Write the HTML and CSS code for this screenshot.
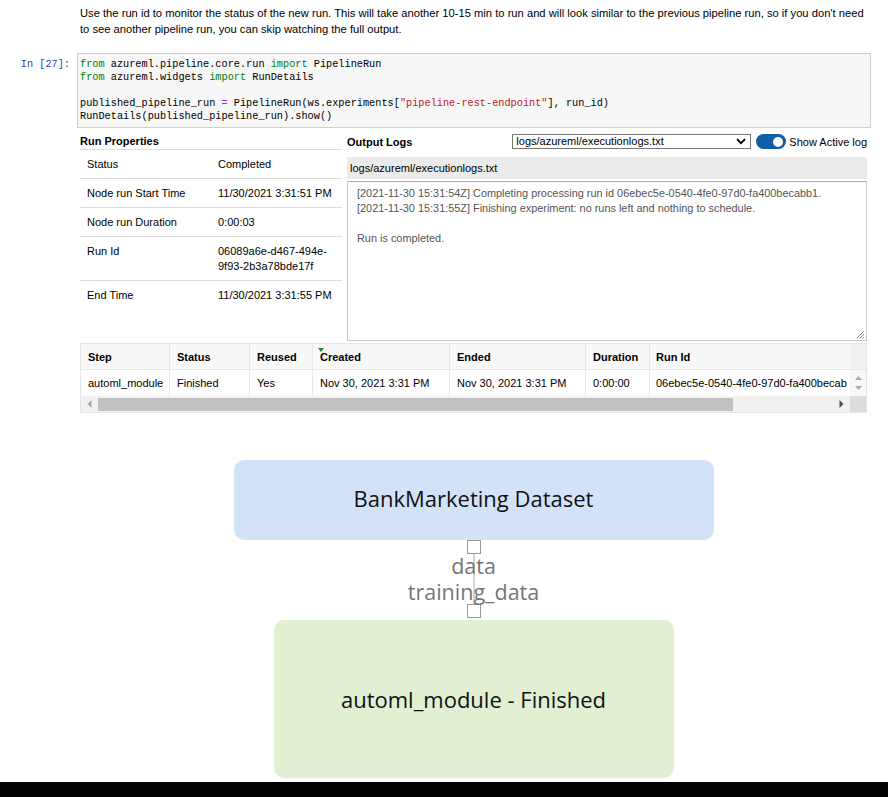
FILE: index.html
```html
<!DOCTYPE html>
<html>
<head>
<meta charset="utf-8">
<link rel="stylesheet" href="styles.css">
</head>
<body>
<div class="md">Use the run id to monitor the status of the new run. This will take another 10-15 min to run and will look similar to the previous pipeline run, so if you don't need<br>to see another pipeline run, you can skip watching the full output.</div>

<div class="cell">
  <div class="prompt">In&nbsp;[27]:</div>
  <div class="code"><div class="ln"><span class="kw">from</span> azureml.pipeline.core.run <span class="kw">import</span> PipelineRun</div><div class="ln"><span class="kw">from</span> azureml.widgets <span class="kw">import</span> RunDetails</div><div class="ln">&nbsp;</div><div class="ln">published_pipeline_run <span class="op">=</span> PipelineRun(ws.experiments[<span class="str">"pipeline-rest-endpoint"</span>], run_id)</div><div class="ln">RunDetails(published_pipeline_run).show()</div></div>
</div>

<div class="widget">
  <div class="top">
    <div class="props">
      <div class="props-title">Run Properties</div>
      <div class="prow"><span class="pk">Status</span><span class="pv">Completed</span></div>
      <div class="prow"><span class="pk">Node run Start Time</span><span class="pv">11/30/2021 3:31:51 PM</span></div>
      <div class="prow"><span class="pk">Node run Duration</span><span class="pv">0:00:03</span></div>
      <div class="prow"><span class="pk">Run Id</span><span class="pv">06089a6e-d467-494e-9f93-2b3a78bde17f</span></div>
      <div class="prow last"><span class="pk">End Time</span><span class="pv">11/30/2021 3:31:55 PM</span></div>
    </div>
    <div class="logs">
      <div class="logs-head">
        <span class="logs-title">Output Logs</span>
        <div class="logs-ctrl">
          <div class="select">
            <span>logs/azureml/executionlogs.txt</span>
            <svg width="10" height="7" viewBox="0 0 10 7"><path d="M1 1.2 L5 5.2 L9 1.2" fill="none" stroke="#000" stroke-width="1.8"/></svg>
          </div>
          <div class="toggle"><span class="knob"></span></div>
          <span class="toggle-label">Show Active log</span>
        </div>
      </div>
      <div class="logfile">logs/azureml/executionlogs.txt</div>
      <div class="logtext">
        <div class="ln">[2021-11-30 15:31:54Z] Completing processing run id 06ebec5e-0540-4fe0-97d0-fa400becabb1.</div>
        <div class="ln">[2021-11-30 15:31:55Z] Finishing experiment: no runs left and nothing to schedule.</div>
        <div class="ln">&nbsp;</div>
        <div class="ln">Run is completed.</div>
        <svg class="grip" width="9" height="9" viewBox="0 0 9 9"><path d="M1 8 L8 1 M4 8 L8 4 M7 8 L8 7" stroke="#888" stroke-width="1"/></svg>
      </div>
    </div>
  </div>

  <div class="steps">
    <div class="grid">
      <div class="th">Step</div>
      <div class="th">Status</div>
      <div class="th">Reused</div>
      <div class="th sorted"><span class="tri"></span>Created</div>
      <div class="th">Ended</div>
      <div class="th">Duration</div>
      <div class="th clip">Run Id</div>
      <div class="vs vs-head"></div>
      <div class="td">automl_module</div>
      <div class="td">Finished</div>
      <div class="td">Yes</div>
      <div class="td">Nov 30, 2021 3:31 PM</div>
      <div class="td">Nov 30, 2021 3:31 PM</div>
      <div class="td">0:00:00</div>
      <div class="td clip"><span class="runid">06ebec5e-0540-4fe0-97d0-fa400becab</span></div>
      <div class="vs vs-body">
        <svg width="9" height="20" viewBox="0 0 9 20"><path d="M1 7 L4.5 3 L8 7 Z M1 13 L4.5 17 L8 13 Z" fill="#a8a8a8"/></svg>
      </div>
    </div>
    <div class="hscroll">
      <svg class="arr-l" width="5" height="8" viewBox="0 0 5 8"><path d="M4.5 0 L0.5 4 L4.5 8 Z" fill="#a8a8a8"/></svg>
      <div class="thumb"></div>
      <svg class="arr-r" width="5" height="8" viewBox="0 0 5 8"><path d="M0.5 0 L4.5 4 L0.5 8 Z" fill="#505050"/></svg>
      <div class="corner"></div>
    </div>
  </div>

  <div class="diagram">
    <div class="node ds">BankMarketing Dataset</div>
    <div class="port"></div>
    <div class="edge">
      <span class="lbl">data</span>
      <span class="lbl">training_data</span>
    </div>
    <div class="port"></div>
    <div class="node mod">automl_module - Finished</div>
  </div>
</div>
<div class="blackbar"></div>
</body>
</html>
```

FILE: styles.css
```css
html, body {
  margin: 0;
  padding: 0;
  background: #fff;
}
body {
  font-family: "Liberation Sans", Arial, sans-serif;
  color: #000;
  height: 797px;
  overflow: hidden;
  position: relative;
}
.md {
  padding: 5px 0 0 80px;
  font-size: 11.2px;
  line-height: 16px;
  color: #000;
  white-space: nowrap;
}
.cell {
  display: flex;
  margin-top: 16px;
}
.prompt {
  width: 77px;
  box-sizing: border-box;
  padding: 5px 7px 0 0;
  text-align: right;
  color: #303f9f;
  font-family: "Liberation Mono", monospace;
  font-size: 10.25px;
  line-height: 13px;
}
.code {
  width: 794px;
  height: 75px;
  box-sizing: border-box;
  border: 1px solid #cfcfcf;
  background: #f7f7f7;
  padding: 4px 2px;
  font-family: "Liberation Mono", monospace;
  font-size: 10.25px;
  line-height: 13px;
  color: #000;
}
.code .ln {
  height: 13px;
  white-space: pre;
}
.kw { color: #008000; }
.op { color: #aa22ff; }
.str { color: #ba2121; }

.widget {
  margin: 6px 0 0 80px;
  width: 787px;
  font-size: 11px;
}
.top {
  display: grid;
  grid-template-columns: 262px 520px;
  column-gap: 5px;
}
.props-title {
  font-weight: bold;
  line-height: 15px;
  height: 15px;
  border-bottom: 1px solid #dedede;
}
.prow {
  display: flex;
  padding: 7px 0 6px 7px;
  line-height: 15px;
  border-bottom: 1px solid #dedede;
}
.prow.last { border-bottom: none; }
.pk { width: 131px; flex: none; }
.pv { width: 118px; }

.logs-head {
  display: flex;
  justify-content: space-between;
  align-items: center;
  height: 15px;
}
.logs-title { font-weight: bold; }
.logs-ctrl {
  display: flex;
  align-items: center;
}
.select {
  width: 239px;
  height: 15px;
  box-sizing: border-box;
  border: 1px solid #767676;
  display: flex;
  justify-content: space-between;
  align-items: center;
  padding: 0 4px 0 3px;
  font-size: 11px;
  line-height: 13px;
}
.toggle {
  width: 30px;
  height: 15px;
  margin-left: 5px;
  border-radius: 8px;
  background: #0f5ea8;
  position: relative;
}
.knob {
  position: absolute;
  right: 3px;
  top: 2.5px;
  width: 10px;
  height: 10px;
  border-radius: 50%;
  background: #fff;
}
.toggle-label {
  margin-left: 3px;
  white-space: nowrap;
}
.logfile {
  margin-top: 8px;
  height: 22px;
  line-height: 22px;
  background: #ebebeb;
  padding-left: 3px;
}
.logtext {
  position: relative;
  margin-top: 2px;
  height: 160px;
  box-sizing: border-box;
  border: 1px solid #c8c8c8;
  border-top-color: #a8a8a8;
  padding: 4px 0 0 9px;
  line-height: 15px;
  color: #555;
  font-size: 10.9px;
}
.logtext .ln {
  height: 15px;
  white-space: nowrap;
}
.grip {
  position: absolute;
  right: 1px;
  bottom: 1px;
}

.steps {
  margin-top: 2px;
  border: 1px solid #e6e6e6;
  width: 787px;
  box-sizing: border-box;
}
.grid {
  display: grid;
  grid-template-columns: 89px 80px 63px 137px 136px 64px 200px 16px;
  grid-template-rows: 26px 26px;
}
.th, .td {
  border-right: 1px solid #e8e8e8;
  padding-left: 7px;
  display: flex;
  align-items: center;
  white-space: nowrap;
  overflow: hidden;
}
.th {
  font-weight: bold;
  background: #f8f8f8;
  border-bottom: 1px solid #e8e8e8;
}
.td { background: #fff; }
.clip { border-right: none; padding-left: 6px; }
.runid { display: block; overflow: hidden; }
.sorted { position: relative; }
.tri {
  position: absolute;
  left: 5px;
  top: 4px;
  width: 0;
  height: 0;
  border-left: 3.5px solid transparent;
  border-right: 3.5px solid transparent;
  border-top: 4px solid #1e8a3a;
}
.vs { background: #f1f1f1; }
.vs-head { border-bottom: 1px solid #e8e8e8; }
.vs-body {
  display: flex;
  align-items: center;
  justify-content: center;
  background: #f8f8f8;
}
.hscroll {
  height: 16px;
  background: #f1f1f1;
  display: flex;
  align-items: center;
  position: relative;
}
.arr-l { margin-left: 6px; }
.thumb {
  width: 635px;
  height: 13px;
  margin-left: 6px;
  background: #c1c1c1;
}
.arr-r { margin-left: 106px; }
.corner {
  margin-left: auto;
  width: 16px;
  height: 16px;
  background: #dcdcdc;
}

.diagram {
  margin-top: 47px;
  display: flex;
  flex-direction: column;
  align-items: center;
  font-family: "Open Sans", "Noto Sans", sans-serif;
}
.node {
  display: flex;
  align-items: center;
  justify-content: center;
  border-radius: 10px;
  color: #111;
  font-size: 22px;
}
.ds {
  width: 480px;
  height: 80px;
  background: #d2e3f8;
  padding-bottom: 4px;
  box-sizing: border-box;
}
.mod {
  width: 400px;
  height: 158px;
  background: #e1f0d3;
  margin-top: 2px;
}
.port {
  width: 14px;
  height: 14px;
  box-sizing: border-box;
  border: 1px solid #9a9a9a;
  background: #fff;
}
.edge {
  position: relative;
  height: 50px;
  display: flex;
  flex-direction: column;
  align-items: center;
}
.edge::before {
  content: "";
  position: absolute;
  left: 50%;
  margin-left: -1px;
  top: 0;
  bottom: 0;
  width: 2px;
  background: #d4d4d4;
}
.lbl {
  position: relative;
  color: #767676;
  font-size: 21.5px;
  line-height: 26px;
}
.lbl:first-child { margin-top: -1px; }
.blackbar {
  position: absolute;
  left: 0;
  right: 0;
  bottom: 0;
  height: 15px;
  background: #000;
}
```
